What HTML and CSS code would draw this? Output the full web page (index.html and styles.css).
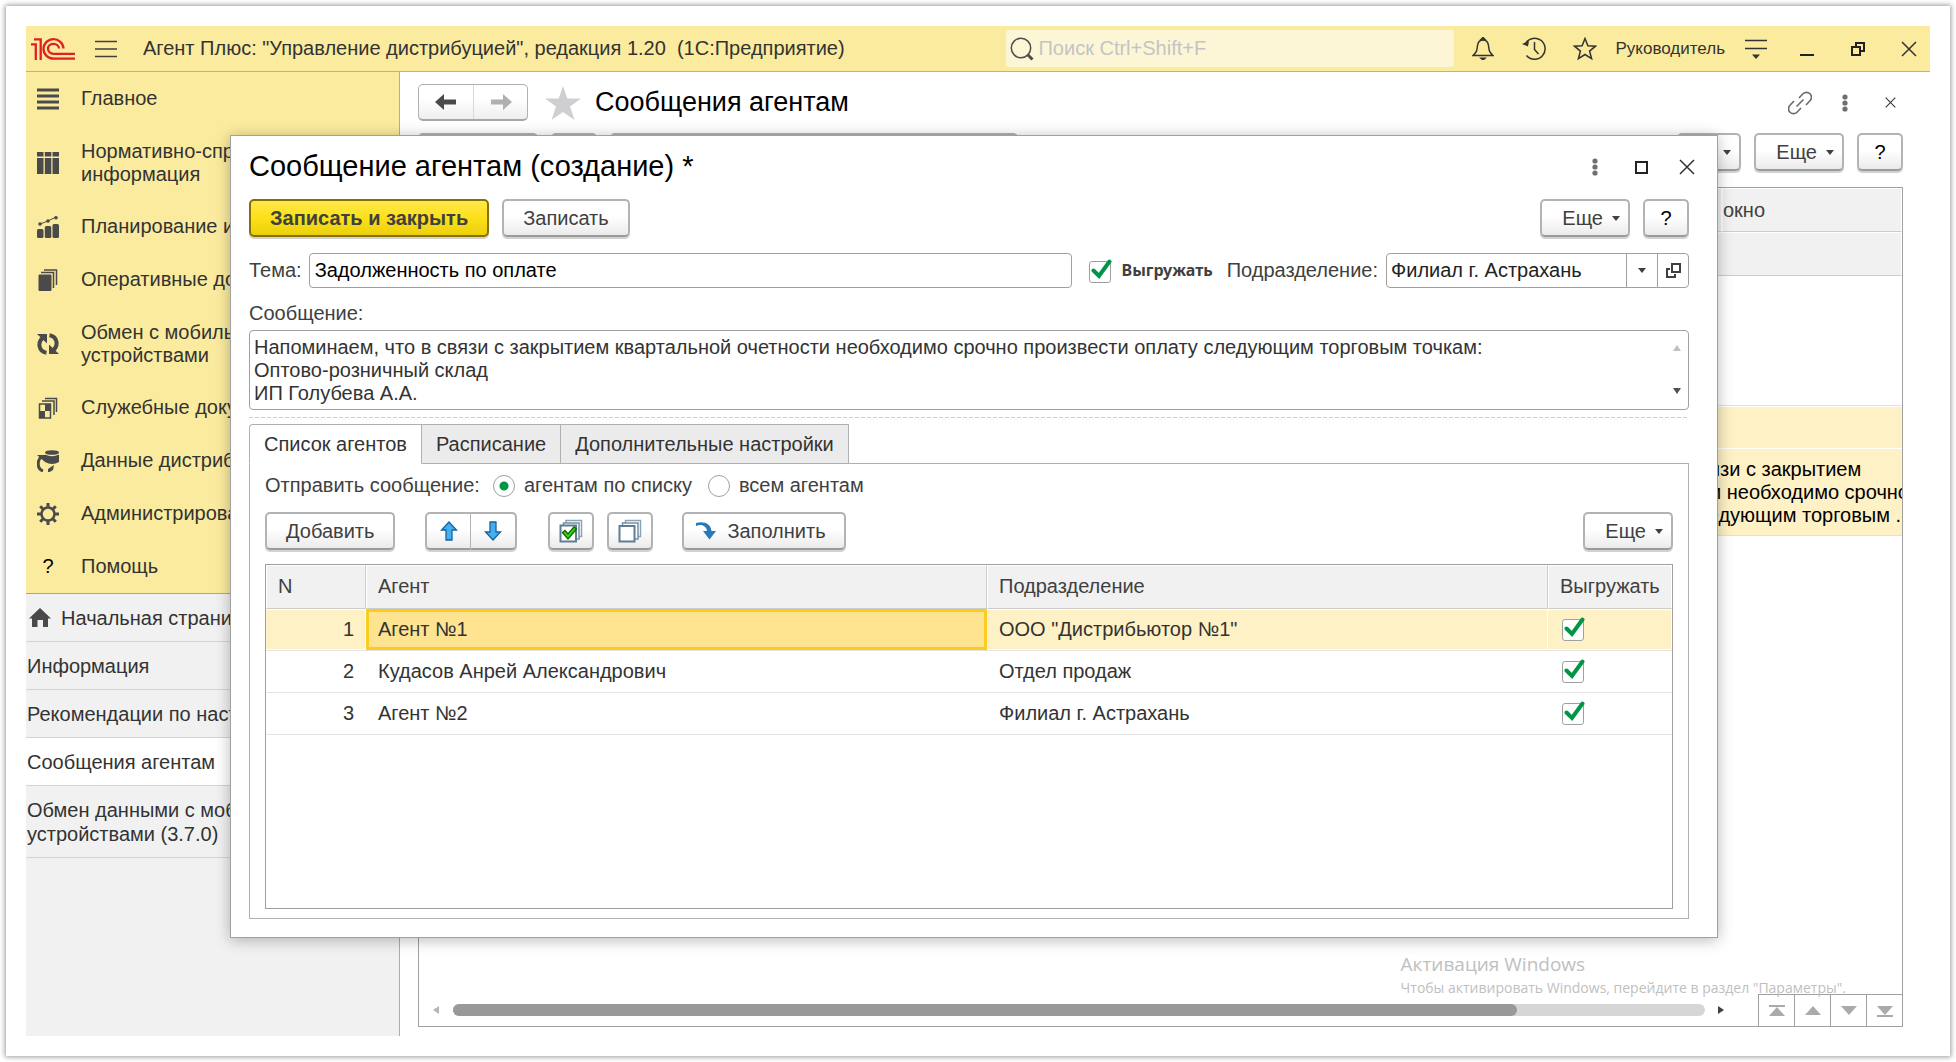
FILE: index.html
```html
<!DOCTYPE html>
<html lang="ru">
<head>
<meta charset="utf-8">
<title>Агент Плюс: Управление дистрибуцией</title>
<link rel="stylesheet" href="styles.css">
</head>
<body>
<svg class="sprite" aria-hidden="true">
  <symbol id="i-caret" viewBox="0 0 8 5"><path d="M0 0h8L4 5z" fill="#404040"/></symbol>
  <symbol id="i-check" viewBox="0 0 24 24"><path d="M4.500 11.500L10 17 20.500 2.500" fill="none" stroke="#009646" stroke-width="4" stroke-linecap="round"/></symbol>
  <symbol id="i-dots" viewBox="0 0 6 18"><g fill="#6e6e6e"><circle cx="3" cy="3" r="2.600"/><circle cx="3" cy="9" r="2.600"/><circle cx="3" cy="15" r="2.600"/></g></symbol>
  <symbol id="i-close" viewBox="0 0 16 16"><path d="M1 1l14 14M15 1L1 15" stroke="#333" stroke-width="1.500" fill="none"/></symbol>
</svg>
<div class="frame">
<div class="app">
  <header class="topbar">
    <svg class="logo" width="44" height="22" viewBox="0 0 44 22" fill="none" stroke="#e01f26" stroke-width="2.300"><path d="M0 6.300h4.800V22M3 1.400h6.700V22"/><path d="M32.500 10.500A10 9.700 0 1 0 22.500 20.600H44"/><path d="M28 10.500A5.500 5 0 1 0 22.500 15.800H44"/></svg>
    <button class="icon-btn burger" aria-label="Меню"><svg width="22" height="18" viewBox="0 0 22 18" stroke="#404040" stroke-width="1.500"><path d="M0 1.500h22M0 9h22M0 16.500h22"/></svg></button>
    <div class="app-title">Агент Плюс: "Управление дистрибуцией", редакция 1.20&nbsp; (1С:Предприятие)</div>
    <label class="search">
      <svg width="24" height="24" viewBox="0 0 24 24" fill="none" stroke="#4d4d4d"><circle cx="11" cy="11" r="9.700" stroke-width="1.500"/><path d="M17.500 17.500l5 5" stroke-width="3"/></svg>
      <input type="search" placeholder="Поиск Ctrl+Shift+F" aria-label="Поиск">
    </label>
    <div class="tools">
      <button class="icon-btn" aria-label="Уведомления"><svg width="22" height="24" viewBox="0 0 22 24" fill="none" stroke="#333" stroke-width="1.500"><path d="M1 18.500C5 15 5 13 5.500 8.500 6 5 8 3 11 3s5 2 5.500 5.500C17 13 17 15 21 18.500z"/><path d="M9 2.500h4L11 .500z" fill="#333"/><path d="M7 20.500h8l-3 2.500h-2z" fill="#333" stroke="none"/></svg></button>
      <button class="icon-btn" aria-label="История"><svg width="24" height="24" viewBox="0 0 24 24" fill="none" stroke="#333" stroke-width="1.500"><path d="M3 7.500A10.500 10.500 0 1 1 4.500 18.500"/><path d="M12.500 5v7.500l4 4.500"/><path d="M0 7l6 2.500L7 4z" fill="#333" stroke="none"/></svg></button>
      <button class="icon-btn" aria-label="Избранное"><svg width="24" height="24" viewBox="0 0 24 24" fill="none" stroke="#333" stroke-width="1.500"><path d="M12 1.500l2.900 7.200 7.600.500-5.900 4.900 2 7.600-6.600-4.200-6.600 4.200 2-7.600L1.500 9.200l7.600-.500z"/></svg></button>
    </div>
    <a class="user" href="#">Руководитель</a>
    <div class="wincontrols">
      <button class="icon-btn" aria-label="Сервис"><svg width="22" height="20" viewBox="0 0 22 20"><path d="M0 1.500h22M0 9.500h22" stroke="#333" stroke-width="1.500"/><path d="M7 15.500h8l-4 4.500z" fill="#333"/></svg></button>
      <button class="icon-btn" aria-label="Свернуть"><svg width="14" height="14" viewBox="0 0 14 14"><path d="M0 13h14" stroke="#222" stroke-width="2"/></svg></button>
      <button class="icon-btn" aria-label="Восстановить"><svg width="14" height="14" viewBox="0 0 14 14" fill="none" stroke="#222" stroke-width="2"><path d="M1 5h8v8H1zM5 4V1h8v8h-3"/></svg></button>
      <button class="icon-btn" aria-label="Закрыть"><svg width="16" height="16"><use href="#i-close"/></svg></button>
    </div>
  </header>

  <div class="body">
    <aside class="sidebar">
      <nav class="sections">
        <a href="#"><svg width="22" height="22" viewBox="0 0 22 22" stroke="#4a4a4a" stroke-width="3"><path d="M0 2h22M0 8h22M0 14h22M0 20h22"/></svg><span>Главное</span></a>
        <a href="#" class="two"><svg width="22" height="22" viewBox="0 0 22 22" fill="#4a4a4a"><path d="M0 0h6.500v4.500H0zM7.800 0h6.500v4.500H7.800zM15.500 0h6.500v4.500h-6.500zM0 6h6.500v16H0zM7.800 6h6.500v16H7.800zM15.500 6h6.500v16h-6.500z"/></svg><span>Нормативно-справочная<br>информация</span></a>
        <a href="#"><svg width="22" height="22" viewBox="0 0 22 22" fill="#4a4a4a"><rect y="13" width="6.500" height="9" rx="1.500"/><rect x="7.800" y="10" width="6.500" height="12" rx="1.500"/><rect x="15.500" y="8" width="6.500" height="14" rx="1.500"/><path d="M3 8l8-3 8-4" stroke="#4a4a4a" fill="none"/><circle cx="3" cy="8" r="1.800"/><circle cx="11" cy="5" r="1.800"/><circle cx="19" cy="1.800" r="1.800"/></svg><span>Планирование и анализ</span></a>
        <a href="#"><svg width="22" height="22" viewBox="0 0 22 22" fill="none" stroke="#4a4a4a"><path d="M2 6h12v15.500H2z" fill="#4a4a4a"/><path d="M4 3.500h12.500V19M7 1h12.500v15" stroke-width="1.500"/></svg><span>Оперативные документы</span></a>
        <a href="#" class="two"><svg width="22" height="22" viewBox="0 0 22 22" fill="none" stroke="#4a4a4a" stroke-width="4"><path d="M9.500 19.800C1.500 18.500.500 9.500 5.500 5M12.500 2.200C20.500 3.500 21.500 12.500 16.500 17"/><path d="M0 1h10v9.500zM22 21H12v-9.500z" fill="#4a4a4a" stroke="none"/></svg><span>Обмен с мобильными<br>устройствами</span></a>
        <a href="#"><svg width="22" height="22" viewBox="0 0 22 22" fill="none" stroke="#4a4a4a" stroke-width="1.500"><path d="M2.500 7h11v14h-11zM5 4h12v14M8 1.500h11.500V15"/><path d="M8 7h5v7H8zM3 14h5v7H3z" fill="#4a4a4a" stroke="none"/></svg><span>Служебные документы</span></a>
        <a href="#"><svg width="22" height="22" viewBox="0 0 22 22" fill="#4a4a4a"><ellipse cx="15" cy="2.500" rx="7" ry="2.300"/><path d="M8 4.500q7 3.500 14 0V12q-7 4-14 0z"/><path d="M6 21C0 19 0 11 4 7" fill="none" stroke="#4a4a4a" stroke-width="3"/><path d="M0 5h8v7zM17 15l-1 5-5 3v-4z"/></svg><span>Данные дистрибьюторов</span></a>
        <a href="#"><svg width="22" height="22" viewBox="0 0 22 22" fill="none" stroke="#4a4a4a"><circle cx="11" cy="11" r="6.500" stroke-width="2.500"/><path d="M11 0v4M11 18v4M0 11h4M18 11h4M3.200 3.200L6 6M16 16l2.800 2.800M18.800 3.200L16 6M6 16l-2.800 2.800" stroke-width="3"/></svg><span>Администрирование</span></a>
        <a href="#"><b class="q">?</b><span>Помощь</span></a>
      </nav>
      <nav class="opened">
        <a href="#"><svg width="22" height="20" viewBox="0 0 22 20" fill="#4a4a4a"><path d="M11 0l11 10.500h-3V19h-5v-7H8.500v7H3v-8.500H0z"/></svg>Начальная страница</a>
        <a href="#">Информация</a>
        <a href="#">Рекомендации по настройке</a>
        <a href="#" class="current">Сообщения агентам</a>
        <a href="#">Обмен данными с мобильными<br>устройствами (3.7.0)</a>
      </nav>
    </aside>

    <main class="workspace">
      <div class="page-head">
        <div class="history">
          <button aria-label="Назад"><svg width="22" height="16" viewBox="0 0 22 16" fill="#4a4a4a"><path d="M0 8l9-8v5.500h12v5H9V16z"/></svg></button>
          <button aria-label="Вперед"><svg width="22" height="16" viewBox="0 0 22 16" fill="#b0b0b0"><path d="M22 8l-9-8v5.500H1v5h12V16z"/></svg></button>
        </div>
        <svg class="fav" width="36" height="34" viewBox="0 0 36 34" fill="#cfcfd1"><path d="M18 0l4.300 12.500H36L25 20.500 29.500 34 18 26 6.500 34 11 20.500 0 12.500h13.700z"/></svg>
        <h1>Сообщения агентам</h1>
        <div class="head-tools">
          <button class="icon-btn" aria-label="Ссылка"><svg width="24" height="24" viewBox="0 0 24 24" fill="none" stroke="#6a6a6a" stroke-width="1.600"><path d="M8.500 15.500l7-7M11 7l4-4.200a4.800 4.800 0 0 1 7 7L18 14M13 17l-4 4.200a4.800 4.800 0 0 1-7-7L6 10"/></svg></button>
          <button class="icon-btn" aria-label="Еще"><svg width="6" height="18"><use href="#i-dots"/></svg></button>
          <button class="icon-btn" aria-label="Закрыть"><svg width="11" height="11"><use href="#i-close"/></svg></button>
        </div>
      </div>
      <div class="commands">
        <button class="btn w-create" aria-label="Создать"></button>
        <button class="btn w-copy" aria-label="Скопировать"></button>
        <button class="btn w-find" aria-label="Поиск"></button>
        <span class="grow"></span>
        <button class="btn drop w-filter" aria-label="Отбор"><svg width="8" height="5"><use href="#i-caret"/></svg></button>
        <button class="btn drop">Еще <svg width="8" height="5"><use href="#i-caret"/></svg></button>
        <button class="btn help">?</button>
      </div>
      <div class="list">
        <table class="list-table">
          <thead>
            <tr><th></th><th class="c-window">окно</th></tr>
            <tr><th colspan="2"></th></tr>
          </thead>
          <tbody>
            <tr class="blank"><td colspan="2"></td></tr>
            <tr class="picked"><td colspan="2"></td></tr>
            <tr class="picked text"><td colspan="2"><p>Напоминаем, что в связи с закрытием<br>квартальной очетности необходимо срочно<br>произвести оплату следующим торговым ...</p></td></tr>
          </tbody>
        </table>
        <div class="list-foot">
          <button class="arrow" aria-label="Влево"><svg width="6" height="8" viewBox="0 0 6 8"><path d="M6 0v8L0 4z" fill="#b5b5b5"/></svg></button>
          <div class="track"><div class="thumb"></div></div>
          <button class="arrow" aria-label="Вправо"><svg width="6" height="8" viewBox="0 0 6 8"><path d="M0 0v8l6-4z" fill="#404040"/></svg></button>
          <div class="pager">
            <button aria-label="В начало"><svg width="16" height="12" viewBox="0 0 16 12" fill="#aaa"><path d="M0 0h16v2H0zM8 2l8 9H0z"/></svg></button>
            <button aria-label="Выше"><svg width="16" height="10" viewBox="0 0 16 10" fill="#aaa"><path d="M8 0l8 9H0z"/></svg></button>
            <button aria-label="Ниже"><svg width="16" height="10" viewBox="0 0 16 10" fill="#aaa"><path d="M8 9l8-9H0z"/></svg></button>
            <button aria-label="В конец"><svg width="16" height="12" viewBox="0 0 16 12" fill="#aaa"><path d="M0 10h16v2H0zM8 10l8-9H0z"/></svg></button>
          </div>
        </div>
      </div>
      <div class="watermark"><div class="wm-title">Активация Windows</div><div class="wm-text">Чтобы активировать Windows, перейдите в раздел "Параметры".</div></div>
    </main>
  </div>

  <section class="dialog" role="dialog" aria-labelledby="dlg-title">
    <div class="dlg-head">
      <h2 id="dlg-title">Сообщение агентам (создание) *</h2>
      <button class="icon-btn" aria-label="Еще"><svg width="6" height="18"><use href="#i-dots"/></svg></button>
      <button class="icon-btn" aria-label="Развернуть"><svg width="13" height="13" viewBox="0 0 13 13"><path d="M1 1h11v11H1z" fill="none" stroke="#222" stroke-width="2"/></svg></button>
      <button class="icon-btn" aria-label="Закрыть"><svg width="16" height="16"><use href="#i-close"/></svg></button>
    </div>
    <div class="row dlg-commands">
      <button class="btn primary">Записать и закрыть</button>
      <button class="btn">Записать</button>
      <span class="grow"></span>
      <button class="btn drop">Еще <svg width="8" height="5"><use href="#i-caret"/></svg></button>
      <button class="btn help">?</button>
    </div>
    <div class="fields">
      <label for="subj">Тема:</label>
      <input id="subj" class="text" type="text" value="Задолженность по оплате">
      <label class="upload"><span class="cb"><input type="checkbox" checked><svg width="24" height="24"><use href="#i-check"/></svg></span><b>Выгружать</b></label>
      <label for="dept">Подразделение:</label>
      <div class="combo">
        <select id="dept"><option>Филиал г. Астрахань</option></select>
        <span class="combo-arrow"><svg width="8" height="5"><use href="#i-caret"/></svg></span>
        <button aria-label="Открыть"><svg width="15" height="15" viewBox="0 0 15 15" fill="none" stroke="#404040" stroke-width="2"><path d="M6 1h8v8H6zM4 6H1v8h8v-3"/></svg></button>
      </div>
    </div>
    <label class="msg-label" for="msg">Сообщение:</label>
    <div class="msg">
      <textarea id="msg" rows="3">Напоминаем, что в связи с закрытием квартальной очетности необходимо срочно произвести оплату следующим торговым точкам:
Оптово-розничный склад
ИП Голубева А.А.</textarea>
      <span class="msg-scroll"><svg width="8" height="6" viewBox="0 0 8 6"><path d="M4 0l4 6H0z" fill="#c0c0c0"/></svg><svg width="8" height="6" viewBox="0 0 8 6"><path d="M4 6l4-6H0z" fill="#505050"/></svg></span>
    </div>
    <svg class="divider" height="1"><path d="M0 .500H3000" stroke="#ccc" stroke-dasharray="4 2"/></svg>
    <div class="tabs" role="tablist">
      <button role="tab" aria-selected="true">Список агентов</button>
      <button role="tab">Расписание</button>
      <button role="tab">Дополнительные настройки</button>
    </div>
    <div class="pane">
      <div class="radios">
        <span>Отправить сообщение:</span>
        <label><input type="radio" name="to" checked>агентам по списку</label>
        <label><input type="radio" name="to">всем агентам</label>
      </div>
      <div class="row pane-commands">
        <button class="btn">Добавить</button>
        <div class="pair">
          <button class="btn" aria-label="Вверх"><svg width="18" height="20" viewBox="0 0 18 20"><path d="M9 1l7.500 8H12v10H6V9H1.500z" fill="#42b0f0" stroke="#17639c" stroke-width="1.300"/></svg></button>
          <button class="btn" aria-label="Вниз"><svg width="18" height="20" viewBox="0 0 18 20"><path d="M9 19l7.500-8H12V1H6v10H1.500z" fill="#42b0f0" stroke="#17639c" stroke-width="1.300"/></svg></button>
        </div>
        <div class="marks">
          <button class="btn" aria-label="Отметить все"><svg width="24" height="24" viewBox="0 0 24 24" fill="#fff" stroke="#5e7d93" stroke-width="1.500"><path d="M7 1.500h15.500v16H7z" stroke="#8ba3b3"/><path d="M4.500 4h15.500v16h-15.500z" stroke="#7691a4"/><path d="M1.500 6.500h15.500v16H1.500z" stroke-width="2"/><path d="M3.500 13.500l2.500-2 3 3.500 6-7 2.500 2L9 20z" fill="#3fd11c" stroke="#0a6b00" stroke-width="1.300"/></svg></button>
          <button class="btn" aria-label="Снять отметки"><svg width="24" height="24" viewBox="0 0 24 24" fill="#fff" stroke="#5e7d93" stroke-width="1.500"><path d="M7.500 1.500h15v16h-15z" stroke="#8ba3b3"/><path d="M4.500 4h15.500v16h-15.500z" stroke="#7691a4"/><path d="M1.500 7h15v15.500h-15z" stroke-width="2"/></svg></button>
        </div>
        <button class="btn fill"><svg width="20" height="18" viewBox="0 0 20 18" fill="#2879b8"><path d="M0 1c8-2.500 15 1 15.500 8H20l-6.500 8.500L7 9h4C10.500 4.500 6 1.500 0 4z"/></svg>Заполнить</button>
        <span class="grow"></span>
        <button class="btn drop">Еще <svg width="8" height="5"><use href="#i-caret"/></svg></button>
      </div>
      <div class="grid">
        <table>
          <colgroup><col class="c-n"><col class="c-agent"><col class="c-dept"><col class="c-up"></colgroup>
          <thead><tr><th>N</th><th>Агент</th><th>Подразделение</th><th>Выгружать</th></tr></thead>
          <tbody>
            <tr class="active"><td>1</td><td class="cursor">Агент №1</td><td>ООО "Дистрибьютор №1"</td><td><span class="cb"><input type="checkbox" aria-label="Выгружать: Агент №1" checked><svg width="24" height="24"><use href="#i-check"/></svg></span></td></tr>
            <tr><td>2</td><td>Кудасов Анрей Александрович</td><td>Отдел продаж</td><td><span class="cb"><input type="checkbox" aria-label="Выгружать: Кудасов" checked><svg width="24" height="24"><use href="#i-check"/></svg></span></td></tr>
            <tr><td>3</td><td>Агент №2</td><td>Филиал г. Астрахань</td><td><span class="cb"><input type="checkbox" aria-label="Выгружать: Агент №2" checked><svg width="24" height="24"><use href="#i-check"/></svg></span></td></tr>
          </tbody>
        </table>
      </div>
    </div>
  </section>
</div>
</div>
</body>
</html>
```
FILE: styles.css
```css
* { box-sizing: border-box; }
body {
  margin: 0;
  padding: 6px;
  height: 100vh;
  background: #fff;
  color: #333;
  font: 20px/23px "Liberation Sans", Arial, sans-serif;
}
button, input, select, textarea { font: inherit; color: inherit; margin: 0; }
button { padding: 0; border: 0; background: none; }
a { color: inherit; text-decoration: none; }
h1, h2, p { margin: 0; font-weight: 400; }
svg { display: block; flex: none; }
.sprite { position: absolute; width: 0; height: 0; }
.grow { flex: 1; }

.frame {
  height: 100%;
  padding: 20px;
  background: #fff;
  box-shadow: 0 0 5px 1px rgba(0, 0, 0, .4);
}
.app { position: relative; height: 100%; display: flex; flex-direction: column; }

/* top bar */
.topbar {
  display: flex;
  align-items: center;
  height: 46px;
  padding: 0 8px 0 5px;
  background: #fbeb9e;
  border-bottom: 1px solid #c8b75a;
}
.icon-btn { width: 26px; height: 26px; display: grid; place-items: center; flex: none; }
.burger { margin: 0 24px 0 18px; }
.app-title { flex: 1; white-space: nowrap; }
.search {
  display: flex;
  align-items: center;
  gap: 4px;
  flex: 0 1 448px;
  height: 37px;
  padding: 0 4px;
  background: #fdf6d6;
  border-radius: 3px;
}
.search input { flex: 1; min-width: 0; padding: 0; border: 0; background: none; outline: 0; }
.search input::placeholder { color: #c4c4c4; opacity: 1; }
.tools { display: flex; gap: 25px; margin: 0 17px 0 16px; }
.user { font-size: 17px; }
.wincontrols { display: flex; gap: 25px; margin-left: 18px; }

.body { flex: 1; display: flex; min-height: 0; }

/* sidebar */
.sidebar {
  flex: 0 0 374px;
  min-width: 0;
  background: #f1f1f1;
  border-right: 1px solid #c3b15c;
}
.sidebar a { display: flex; align-items: center; white-space: nowrap; }
.sections { background: #fbeb9e; border-bottom: 1px solid #c3a94a; }
.sections a { gap: 22px; padding: 15px 11px; }
.sections .two { padding-bottom: 14px; }
.sections .q { width: 22px; text-align: center; font-weight: 400; color: #000; }
.opened a {
  gap: 10px;
  padding: 12px 1px 11px;
  line-height: 24px;
  border-bottom: 1px solid #d4d4d4;
}
.opened svg { margin-left: 2px; }
.opened .current { background: #fff; }

/* workspace behind the dialog */
.workspace {
  position: relative;
  flex: 1;
  min-width: 0;
  display: flex;
  flex-direction: column;
  padding: 12px 27px 9px 18px;
}
.page-head { display: flex; align-items: center; height: 37px; margin-bottom: 12px; }
.history { display: flex; border: 1px solid #b0b0b0; border-bottom: 2px solid #a6a6a6; border-radius: 5px; background: linear-gradient(#fff 40%, #eee); }
.history button { width: 54px; height: 34px; display: grid; place-items: center; }
.history button + button { border-left: 1px solid #d8d8d8; }
.fav { margin: 0 14px 0 17px; }
h1, h2 { padding-bottom: 2px; line-height: 32px; color: #000; white-space: nowrap; }
h1 { font-size: 27px; }
h2 { font-size: 29px; }
.head-tools { display: flex; gap: 19px; margin-left: auto; }
.commands { display: flex; gap: 13px; margin-bottom: 16px; }
.w-create { width: 120px; }
.w-copy { width: 46px; }
.w-find { width: 408px; }
.w-filter { width: 64px; }

.btn {
  height: 38px;
  padding: 0 19px;
  display: inline-flex;
  align-items: center;
  justify-content: center;
  color: #404040;
  background: linear-gradient(#fff 45%, #ebebeb);
  border: 2px solid #b3b3b3;
  border-bottom-color: #9a9a9a;
  border-radius: 5px;
  box-shadow: 0 2px 0 #d2d2d2;
  white-space: nowrap;
}
.btn.drop { gap: 9px; padding: 0 8px 0 20px; justify-content: flex-end; }
.btn.help { width: 46px; padding: 0; color: #000; }
.btn.primary {
  font-weight: 700;
  background: linear-gradient(#ffe84a, #fde01a 50%, #ecd00c);
  border-color: #857106;
}

.list { flex: 1; display: flex; flex-direction: column; border: 1px solid #a0a0a0; min-height: 0; overflow: hidden; }
table { width: 100%; border-collapse: separate; border-spacing: 0; table-layout: fixed; }
th, td { padding: 0; text-align: left; font-weight: 400; }
.list-table th { height: 44px; background: #f1f1f1; border: 1px solid #fff; border-bottom-color: #ccc; color: #404040; }
.list-table .c-window { width: 180px; }
.list-table .blank td { height: 130px; border-bottom: 1px solid #e0e0e0; }
.list-table .picked td { height: 42px; background: #fef1c5; border: 1px solid #fff; border-width: 1px 0 0; }
.list-table .text td { height: 88px; border-bottom: 1px solid #e0e0e0; }
.list-table p { width: 396px; margin-left: auto; white-space: nowrap; }
.list-foot { display: flex; align-items: center; height: 32px; margin-top: auto; padding-left: 10px; }
.arrow { width: 14px; height: 14px; display: grid; place-items: center; }
.track { flex: 1; height: 12px; margin: 0 9px 0 10px; background: #d6d6d6; border-radius: 6px; }
.thumb { width: 85%; height: 12px; background: #999; border-radius: 6px; }
.pager { display: flex; margin-left: 30px; align-self: stretch; }
.pager button { width: 36px; display: grid; place-items: center; border: 1px solid #a0a0a0; border-width: 1px 0 0 1px; }
.watermark { position: absolute; right: 84px; bottom: 37px; color: #c0c0c0; font-family: "Open Sans", "Noto Sans", sans-serif; white-space: nowrap; }
.wm-title { font-size: 19px; }
.wm-text { font-size: 14px; }

/* dialog window */
.dialog {
  position: absolute;
  inset: 109px 212px 98px 204px;
  display: flex;
  flex-direction: column;
  padding: 0 28px 18px 18px;
  background: #fff;
  border: 1px solid #a0a0a0;
  box-shadow: 0 2px 14px rgba(0, 0, 0, .28);
}
.dlg-head { display: flex; align-items: center; gap: 20px; height: 62px; margin-right: -11px; }
.dlg-head h2 { flex: 1; }
.row { display: flex; align-items: center; }
.dlg-commands { gap: 13px; margin: 1px 0 16px; }
.fields { display: flex; align-items: center; height: 35px; color: #404040; }
.text {
  flex: 1;
  min-width: 0;
  height: 35px;
  margin: 0 17px 0 7px;
  padding: 0 5px;
  color: #000;
  border: 1px solid #a0a0a0;
  border-radius: 4px;
}
.upload { display: flex; align-items: center; gap: 9px; margin-right: 14px; }
.upload b { font: 700 16px/23px "Noto Sans", sans-serif; }
.cb { display: grid; width: 24px; }
.cb > * { grid-area: 1 / 1; }
.cb input { appearance: none; width: 22px; height: 22px; align-self: end; background: #fff; border: 1px solid #a0a0a0; border-radius: 3px; }
.cb svg { pointer-events: none; }
.combo {
  display: grid;
  grid-template-columns: 1fr 31px 31px;
  width: 303px;
  height: 35px;
  margin-left: 8px;
  color: #222;
  border: 1px solid #a0a0a0;
  border-radius: 4px;
}
.combo select { grid-area: 1 / 1 / 2 / 3; appearance: none; border: 0; background: none; padding: 0 4px; }
.combo-arrow { grid-area: 1 / 2; pointer-events: none; }
.combo-arrow, .combo button { display: grid; place-items: center; border-left: 1px solid #a0a0a0; }
.msg-label { margin: 14px 0 5px; color: #404040; }
.msg { display: grid; grid-template-columns: 1fr 22px; border: 1px solid #a0a0a0; border-radius: 4px; }
.msg textarea { height: 78px; padding: 5px 4px 0; border: 0; background: none; resize: none; overflow: hidden; outline: 0; }
.msg-scroll { display: flex; flex-direction: column; justify-content: space-between; padding: 14px 7px 15px; }
.divider { width: 100%; margin: 7px 0 6px; }

.tabs { display: flex; margin-bottom: -1px; z-index: 1; }
.tabs button { height: 40px; padding: 0 14px; border: 1px solid #b0b0b0; border-left-width: 0; background: #ebebeb; }
.tabs [aria-selected] { border-left-width: 1px; border-bottom-color: #fff; border-radius: 4px 0 0 0; background: #fff; }
.pane { flex: 1; display: flex; flex-direction: column; padding: 0 15px 9px; border: 1px solid #b0b0b0; }
.radios { display: flex; align-items: center; height: 43px; margin-bottom: 5px; gap: 13px; color: #404040; }
.radios label { display: flex; align-items: center; gap: 9px; margin-right: 3px; }
.radios input { appearance: none; width: 22px; height: 22px; border: 1px solid #a0a0a0; border-radius: 50%; background: #fff; }
.radios input:checked { background: radial-gradient(circle, #009646 4px, #fff 5px); }
.pane-commands { margin-bottom: 14px; }
.pair { display: flex; margin: 0 31px 0 30px; }
.pair .btn { width: 46px; padding: 0; }
.pair .btn:first-child { border-right-width: 1px; border-radius: 5px 0 0 5px; }
.pair .btn:last-child { border-left-width: 0; border-radius: 0 5px 5px 0; }
.marks { display: flex; gap: 13px; margin-right: 29px; }
.marks .btn { width: 46px; padding: 0; }
.btn.fill { gap: 11px; padding: 0 18px 0 12px; }
.grid { flex: 1; border: 1px solid #a0a0a0; }
.grid th { height: 44px; padding: 0 11px 2px; color: #404040; background: #f1f1f1; border: 1px solid #fff; border-bottom-color: #ccc; border-right-color: #ccc; }
.grid th:last-child { border-right-color: #fff; }
.grid td { height: 42px; padding: 0 12px; border-bottom: 1px solid #e4e4e4; }
.grid td:first-child { text-align: right; }
.grid td:last-child { padding: 0 0 2px 14px; }
.c-n { width: 100px; }
.c-dept { width: 561px; }
.c-up { width: 124px; }
.active td { background: #fef1c5; box-shadow: inset 0 1px #fff, inset 0 -1px #fff, inset -1px 0 #fff; }
.grid .cursor { background: #fee491; box-shadow: inset 0 0 0 3px #fbcb20; }
```
